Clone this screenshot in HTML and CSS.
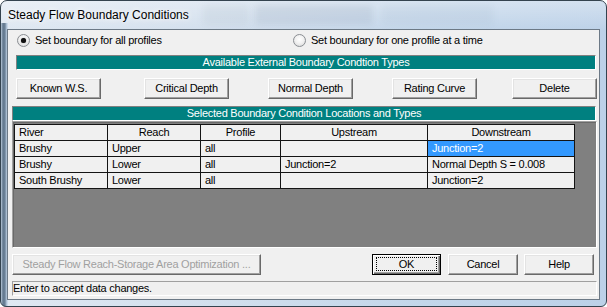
FILE: index.html
```html
<!DOCTYPE html>
<html>
<head>
<meta charset="utf-8">
<link rel="stylesheet" href="styles.css">
</head>
<body>
<div class="window">
  <div class="titlebar">
    <span class="title">Steady Flow Boundary Conditions</span>
    <div class="ghosts">
      <span class="ghost g1"></span>
      <span class="ghost g2"></span>
      <span class="ghost g3"></span>
    </div>
  </div>
  <div class="client">
    <div class="radios">
      <label class="opt"><span class="radio on"></span><span>Set boundary for all profiles</span></label>
      <label class="opt"><span class="radio"></span><span>Set boundary for one profile at a time</span></label>
    </div>
    <div class="bar bar1">Available External Boundary Condtion Types</div>
    <div class="btnrow">
      <button class="btn">Known W.S.</button>
      <button class="btn">Critical Depth</button>
      <button class="btn">Normal Depth</button>
      <button class="btn">Rating Curve</button>
      <button class="btn">Delete</button>
    </div>
    <div class="bar bar2">Selected Boundary Condition Locations and Types</div>
    <div class="gridarea">
      <table class="grid">
        <colgroup>
          <col class="c1"><col class="c2"><col class="c3"><col class="c4"><col class="c5">
        </colgroup>
        <tr class="head"><th class="left">River</th><th>Reach</th><th>Profile</th><th>Upstream</th><th>Downstream</th></tr>
        <tr><td>Brushy</td><td>Upper</td><td>all</td><td></td><td class="sel">Junction=2</td></tr>
        <tr><td>Brushy</td><td>Lower</td><td>all</td><td>Junction=2</td><td>Normal Depth S = 0.008</td></tr>
        <tr><td>South Brushy</td><td>Lower</td><td>all</td><td></td><td>Junction=2</td></tr>
      </table>
    </div>
    <div class="bottomrow">
      <button class="btn disabled">Steady Flow Reach-Storage Area Optimization ...</button>
      <button class="btn default"><span class="focus">OK</span></button>
      <button class="btn">Cancel</button>
      <button class="btn">Help</button>
    </div>
    <div class="status">Enter to accept data changes.</div>
  </div>
</div>
</body>
</html>
```

FILE: styles.css
```css
* { box-sizing: border-box; }
html, body { margin: 0; padding: 0; }
body {
  width: 607px;
  height: 307px;
  overflow: hidden;
  background: #ffffff;
  font-family: "Liberation Sans", Arial, sans-serif;
}

.window {
  width: 607px;
  height: 307px;
  border: 1px solid #34434f;
  border-radius: 7px 7px 6px 6px;
  overflow: hidden;
  display: flex;
  flex-direction: column;
  background:
    linear-gradient(to right, #c9d8e8 0, #7f93a8 1px, #5d7389 3px, #8fa4ba 5px, #c7d7e8 6px) left 22px / 7px 100% no-repeat,
    linear-gradient(to bottom, rgba(255,255,255,0.35) 0, rgba(255,255,255,0) 30px),
    linear-gradient(to right, #dfe8f2 0, #d2dfed 35%, #c3d6ea 70%, #bcd1e8 100%);
}

.titlebar {
  height: 28px;
  flex: none;
  display: flex;
  padding: 7px 0 0 7px;
}
.title {
  font-size: 12px;
  line-height: 14px;
  color: #000;
  white-space: nowrap;
  text-shadow: 0 0 5px #ffffff, 0 0 9px rgba(255,255,255,0.9);
}
.ghosts {
  display: flex;
  margin: -3px 0 0 14px;
  height: 22px;
}
.ghost {
  display: block;
  height: 20px;
  border-radius: 3px;
  filter: blur(3px);
}
.g1 { width: 46px; background: rgba(110,125,140,0.08); }
.g2 { width: 118px; margin-left: 6px; background: rgba(100,118,138,0.12); }
.g3 { width: 112px; margin-left: 8px; background: rgba(120,140,160,0.08); }

.client {
  margin: 0 6px;
  height: 271px;
  flex: none;
  border: 1px solid #6c7986;
  background: #f0f0f0;
  display: flex;
  flex-direction: column;
  font-size: 11px;
  line-height: 13px;
  letter-spacing: -0.25px;
  color: #000;
}

.radios {
  margin-top: 4px;
  height: 13px;
  padding-left: 9px;
  display: grid;
  grid-template-columns: 276px auto;
}
.opt {
  display: flex;
  align-items: center;
  white-space: nowrap;
}
.radio {
  width: 13px;
  height: 13px;
  margin-right: 5px;
  border-radius: 50%;
  border: 1px solid #8a8e93;
  background: radial-gradient(circle at 50% 40%, #ffffff 0, #f2f2f2 45%, #d4d4d4 100%);
  display: flex;
  align-items: center;
  justify-content: center;
  flex: none;
}
.radio.on::after {
  content: "";
  width: 5px;
  height: 5px;
  border-radius: 50%;
  background: #111;
  box-shadow: 0 0 1px #444;
}

.bar {
  height: 15px;
  background: #008080;
  color: #ffffff;
  text-align: center;
  border-style: solid;
  border-width: 1px;
  border-color: #808080 #ffffff #ffffff #808080;
  white-space: nowrap;
}
.bar1 { margin: 8px 0 0 8px; width: 580px; }
.bar2 { margin: 7px 0 0 4px; width: 584px; }

.btn {
  font-family: inherit;
  font-size: 11px;
  letter-spacing: -0.25px;
  line-height: 13px;
  color: #000;
  height: 21px;
  padding: 0;
  background: #f0f0f0;
  border: 1px solid;
  border-color: #ffffff #696969 #696969 #ffffff;
  box-shadow: inset -1px -1px 0 #a0a0a0, inset 1px 1px 0 #e3e3e3;
  white-space: nowrap;
}

.btnrow {
  margin: 8px 0 0 8px;
  height: 21px;
  display: grid;
  grid-template-columns: 128px 124px 124px 120px 85px;
}
.btnrow .btn { width: 85px; }

.gridarea {
  margin: 0 0 0 4px;
  width: 585px;
  height: 127px;
  background: #808080;
  border: 1px solid;
  border-color: #a0a0a0 #ffffff #ffffff #a0a0a0;
  box-shadow: inset 1px 1px 0 #696969;
  padding: 2px 0 0 1px;
}
.grid {
  border-collapse: collapse;
  table-layout: fixed;
  width: 560px;
  background: #f0f0f0;
}
.grid col.c1 { width: 93px; }
.grid col.c2 { width: 93px; }
.grid col.c3 { width: 80px; }
.grid col.c4 { width: 147px; }
.grid col.c5 { width: 147px; }
.grid th, .grid td {
  border: 1px solid #141414;
  height: 16px;
  padding: 0 0 0 4px;
  font-weight: normal;
  text-align: left;
  white-space: nowrap;
  overflow: hidden;
}
.grid th { text-align: center; padding: 0; }
.grid th.left { text-align: left; padding-left: 4px; }
.grid td.sel { background: #3399ff; color: #ffffff; }

.bottomrow {
  margin: 6px 0 0 4px;
  height: 21px;
  display: grid;
  grid-template-columns: 360px 76px 76px 70px;
}
.bottomrow .btn { width: 70px; }
.bottomrow .btn.disabled { width: 249px; color: #a0a0a0; }
.bottomrow .btn.default {
  width: 69px;
  border: 1px solid #000;
  box-shadow: inset 1px 1px 0 #ffffff, inset -1px -1px 0 #696969, inset -2px -2px 0 #a0a0a0;
  display: flex;
  padding: 2px 3px 3px 3px;
}
.focus {
  flex: 1;
  border: 1px dotted #000;
  display: flex;
  align-items: center;
  justify-content: center;
}

.status {
  margin: 6px 0 0 4px;
  width: 585px;
  height: 15px;
  border: 1px solid;
  border-color: #a0a0a0 #ffffff #ffffff #a0a0a0;
  padding-left: 0;
  white-space: nowrap;
}
```
